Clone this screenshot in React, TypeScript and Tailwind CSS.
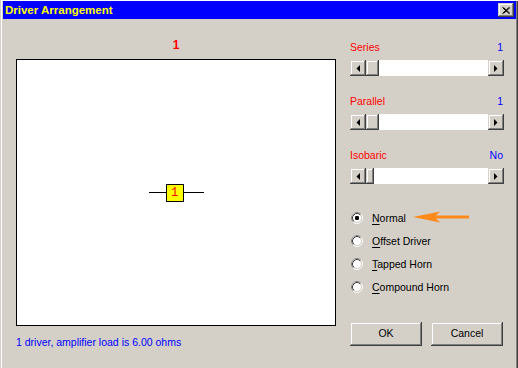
import React from "react";

const raised =
  "bg-[#d4d0c8] shadow-[inset_-1px_-1px_#404040,inset_1px_1px_#d4d0c8,inset_-2px_-2px_#808080,inset_2px_2px_#ffffff]";

function Tri({ dir }: { dir: "left" | "right" }) {
  return (
    <svg width="4" height="7" viewBox="0 0 4 7">
      {dir === "left" ? (
        <polygon points="4,0 4,7 0.5,3.5" fill="#000" />
      ) : (
        <polygon points="0,0 0,7 3.5,3.5" fill="#000" />
      )}
    </svg>
  );
}

function ScrollBar({ thumb }: { thumb: string }) {
  return (
    <div className="flex h-[16px] w-[154px] bg-white">
      <div className={`${raised} flex h-[16px] w-[16px] items-center justify-center`}>
        <Tri dir="left" />
      </div>
      <div className={`${raised} h-[16px] ${thumb}`} />
      <div className="flex-1" />
      <div className={`${raised} flex h-[16px] w-[16px] items-center justify-center`}>
        <Tri dir="right" />
      </div>
    </div>
  );
}

function Radio({ checked }: { checked?: boolean }) {
  return (
    <svg width="12" height="12" viewBox="0 0 12 12">
      <circle cx="6" cy="6" r="5.5" fill="none" stroke="#ffffff" />
      <path d="M2.11 9.89 A5.5 5.5 0 0 1 9.89 2.11" fill="none" stroke="#808080" />
      <circle cx="6" cy="6" r="4.5" fill="#ffffff" stroke="#d4d0c8" />
      <path d="M2.82 9.18 A4.5 4.5 0 0 1 9.18 2.82" fill="none" stroke="#404040" />
      {checked && <rect x="4" y="4" width="4" height="4" rx="1.3" fill="#000" />}
    </svg>
  );
}

function RadioRow({ first, rest, checked }: { first: string; rest: string; checked?: boolean }) {
  return (
    <div className="flex h-[23px] items-center">
      <div className="ml-[1px] flex h-[12px] w-[12px]">
        <Radio checked={checked} />
      </div>
      <span className="ml-[9px] text-[10.5px] leading-[14px] text-black">
        <span className="underline underline-offset-2">{first}</span>
        {rest}
      </span>
    </div>
  );
}

function Label({ name, value }: { name: string; value: string }) {
  return (
    <div className="flex h-[14px] items-center justify-between text-[10.5px] leading-[14px]">
      <span className="text-[#ff0000]">{name}</span>
      <span className="mr-[1px] text-[#0000ff]">{value}</span>
    </div>
  );
}

export default function App() {
  return (
    <div className="relative flex h-[368px] w-[518px] flex-col overflow-hidden bg-[#d4d0c8] pt-[1px] font-['Liberation_Sans',Arial,sans-serif] shadow-[inset_1px_0_#d4d0c8,inset_2px_0_#ffffff,inset_0_1px_#ffffff,inset_-1px_0_#404040,inset_-2px_0_#808080]">
      {/* Title bar */}
      <div className="ml-[3px] mr-[2px] flex h-[18px] items-center justify-between bg-[#0000ff] pl-[2px] pr-[2px]">
        <span className="text-[11.5px] font-bold leading-[14px] text-[#ffff00]">Driver Arrangement</span>
        <div className={`${raised} flex h-[14px] w-[16px] items-center justify-center`}>
          <svg width="8" height="7" viewBox="0 0 8 7">
            <path d="M0.5 0.5 L7 6.5 M1.5 0.5 L8 6.5 M7 0.5 L0.5 6.5 M8 0.5 L1.5 6.5" stroke="#000" strokeWidth="1" />
          </svg>
        </div>
      </div>

      {/* Body */}
      <div className="flex flex-1 pl-[16px]">
        {/* Left column */}
        <div className="flex w-[320px] flex-col pt-[19px]">
          <div className="h-[14px] text-center text-[12px] font-bold leading-[14px] text-[#ff0000]">1</div>
          <div className="mt-[7px] flex h-[267px] w-[320px] items-center justify-center border border-black bg-white">
            <div className="flex items-center">
              <div className="h-[1px] w-[17px] bg-black" />
              <div className="flex h-[18px] w-[18px] items-center justify-center border border-black bg-[#ffff00] font-['Liberation_Mono',monospace] text-[12px] leading-none text-[#ff0000]">
                1
              </div>
              <div className="h-[1px] w-[20px] bg-black" />
            </div>
          </div>
          <div className="mt-[9px] text-[10.5px] leading-[14px] text-[#0000ff]">
            1 driver, amplifier load is 6.00 ohms
          </div>
        </div>

        {/* Right column */}
        <div className="ml-[14px] flex w-[154px] flex-col pt-[21px]">
          <Label name="Series" value="1" />
          <div className="mt-[6px]">
            <ScrollBar thumb="w-[13px]" />
          </div>
          <div className="mt-[18px]">
            <Label name="Parallel" value="1" />
          </div>
          <div className="mt-[6px]">
            <ScrollBar thumb="w-[13px]" />
          </div>
          <div className="mt-[18px]">
            <Label name="Isobaric" value="No" />
          </div>
          <div className="mt-[6px]">
            <ScrollBar thumb="w-[8px]" />
          </div>

          <div className="mt-[22px] flex flex-col">
            <RadioRow first="N" rest="ormal" checked />
            <RadioRow first="O" rest="ffset Driver" />
            <RadioRow first="T" rest="apped Horn" />
            <RadioRow first="C" rest="ompound Horn" />
          </div>

          <div className="mt-[24px] flex gap-[9px]">
            <div className={`${raised} flex h-[24px] w-[72px] items-center justify-center text-[10.5px] text-black`}>OK</div>
            <div className={`${raised} flex h-[24px] w-[72px] items-center justify-center text-[10.5px] text-black`}>Cancel</div>
          </div>
        </div>
      </div>

      {/* Orange annotation arrow */}
      <svg className="absolute left-[413px] top-[210px]" width="58" height="14" viewBox="0 0 58 14">
        <polygon points="0,7 27,1.5 23,5.5 56,5.5 56,8.5 23,8.5 27,12.5" fill="#ff8a1c" />
      </svg>
    </div>
  );
}
